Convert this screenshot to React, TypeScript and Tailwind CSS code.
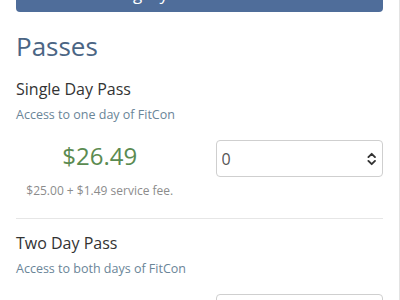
import React, { useState } from 'react';

type Pass = {
  name: string;
  blurb: string;
  price: string;
  fee: string;
};

const passes: Pass[] = [
  { name: 'Single Day Pass', blurb: 'Access to one day of FitCon', price: '$26.49', fee: '$25.00 + $1.49 service fee.' },
  { name: 'Two Day Pass', blurb: 'Access to both days of FitCon', price: '$47.99', fee: '$45.00 + $2.99 service fee.' },
];

const SelectArrows = () => (
  <svg width="10" height="14" viewBox="0 0 10 14" fill="none" stroke="#333" strokeWidth="2" strokeLinecap="round" strokeLinejoin="round">
    <path d="M1.5 5 L5 1.5 L8.5 5" />
    <path d="M1.5 9 L5 12.5 L8.5 9" />
  </svg>
);

const PassRow: React.FC<{ pass: Pass; last?: boolean }> = ({ pass, last }) => {
  const [qty, setQty] = useState('0');

  return (
    <div className={last ? '' : 'border-b border-[#e6e6e6] pb-[19px]'}>
      <h3 className="text-[16px] leading-6 text-[#333]">{pass.name}</h3>
      <p className="mt-[4px] text-[12.5px] leading-5 text-[#6a8598]">{pass.blurb}</p>

      <div className="mt-[15px] grid grid-cols-2 gap-8">
        <div className="flex flex-col items-center">
          <span className="text-[24px] leading-8 text-[#5b8b51]">{pass.price}</span>
          <span className="mt-[11px] text-[12px] leading-4 text-[#8c8c8c]">{pass.fee}</span>
        </div>
        <div>
          <label className="flex h-[37px] items-center justify-between rounded-[4px] border border-[#cfcfcf] bg-white pl-[5px] pr-[6px]">
            <select
              value={qty}
              onChange={e => setQty(e.target.value)}
              className="w-full appearance-none bg-transparent text-[16px] text-[#555] outline-none"
            >
              {[0, 1, 2, 3, 4, 5].map(n => (
                <option key={n} value={n}>{n}</option>
              ))}
            </select>
            <SelectArrows />
          </label>
        </div>
      </div>
    </div>
  );
};

const App: React.FC = () => {
  return (
    <div className="h-[300px] w-[400px] overflow-hidden border-r border-[#e3e3e3] bg-white font-['Open_Sans',sans-serif]">
      {/* category button, scrolled mostly out of view */}
      <div className="mx-4 flex h-3 items-end overflow-hidden rounded-b-[4px] bg-[#4f6d9a] pl-[30px]">
        <span className="mb-[10px] text-[17px] leading-none text-white">Select Category</span>
      </div>

      <div className="px-4">
        <h2 className="mt-[18px] text-[26px] leading-8 text-[#4b6584]">Passes</h2>

        <div className="mt-[15px] flex flex-col gap-3">
          {passes.map((p, i) => (
            <PassRow key={p.name} pass={p} last={i === passes.length - 1} />
          ))}
        </div>
      </div>
    </div>
  );
};

export default App;
